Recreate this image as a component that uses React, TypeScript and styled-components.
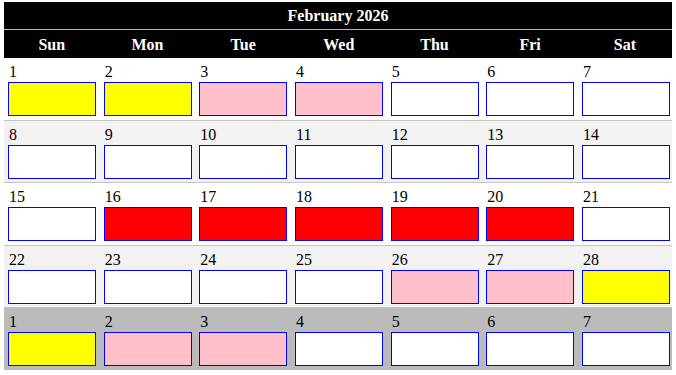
import React from "react"
import styled, { createGlobalStyle } from "styled-components"

// --- month data ---
type Fill = "none" | "yellow" | "pink" | "red"
type Day = { n: number; fill: Fill }

const weekdays = ["Sun", "Mon", "Tue", "Wed", "Thu", "Fri", "Sat"]

const row = (nums: number[], fills: Fill[]): Day[] =>
  nums.map((n, i) => ({ n, fill: fills[i] }))

const weeks: { days: Day[]; tone: "plain" | "alt" | "next" }[] = [
  {
    tone: "plain",
    days: row([1, 2, 3, 4, 5, 6, 7], ["yellow", "yellow", "pink", "pink", "none", "none", "none"]),
  },
  {
    tone: "alt",
    days: row([8, 9, 10, 11, 12, 13, 14], ["none", "none", "none", "none", "none", "none", "none"]),
  },
  {
    tone: "plain",
    days: row([15, 16, 17, 18, 19, 20, 21], ["none", "red", "red", "red", "red", "red", "none"]),
  },
  {
    tone: "alt",
    days: row([22, 23, 24, 25, 26, 27, 28], ["none", "none", "none", "none", "pink", "pink", "yellow"]),
  },
  {
    tone: "next",
    days: row([1, 2, 3, 4, 5, 6, 7], ["yellow", "pink", "pink", "none", "none", "none", "none"]),
  },
]

const fills: Record<Fill, string> = {
  none: "#ffffff",
  yellow: "#ffff00",
  pink: "#ffc0cb",
  red: "#ff0000",
}

const tones = {
  plain: "#ffffff",
  alt: "#f2f2f2",
  next: "#bbbbbb",
}

export default function App() {
  return (
    <>
      <GlobalStyle />
      <Calendar>
        <Title>February 2026</Title>
        <HeadRow>
          {weekdays.map(d => (
            <HeadCell key={d}>{d}</HeadCell>
          ))}
        </HeadRow>
        {weeks.map((w, i) => (
          <WeekRow key={i} $tone={w.tone} $last={i === weeks.length - 1}>
            {w.days.map((d, j) => (
              <DayCell key={j}>
                <DayNum>{d.n}</DayNum>
                <Slot $fill={fills[d.fill]} />
              </DayCell>
            ))}
          </WeekRow>
        ))}
      </Calendar>
    </>
  )
}

// --- styled components ---
const GlobalStyle = createGlobalStyle`
  body {
    margin: 0;
    background: #fff;
    font-family: "Liberation Serif", "Times New Roman", serif;
    font-size: 16px;
    color: #000;
  }
`

const cols = "repeat(6, 95.67px) 1fr"

const Calendar = styled.div`
  width: 668px;
  margin: 2px 0 0 4px;
`

const Title = styled.div`
  height: 27px;
  line-height: 27px;
  background: #000;
  color: #fff;
  font-weight: bold;
  text-align: center;
  border-bottom: 1px solid #bbb;
`

const HeadRow = styled.div`
  display: grid;
  grid-template-columns: ${cols};
  box-sizing: border-box;
  height: 28px;
  padding-top: 1px;
  background: #000;
`

const HeadCell = styled.div`
  color: #fff;
  font-weight: bold;
  text-align: center;
  line-height: 27px;
`

const WeekRow = styled.div<{ $tone: keyof typeof tones; $last: boolean }>`
  display: grid;
  grid-template-columns: ${cols};
  background: ${p => tones[p.$tone]};
  padding: 4px 0 3.5px;
  border-bottom: ${p => (p.$last ? "none" : "1px solid #c4c4c4")};
`

const DayCell = styled.div`
  padding: 0 4px;
`

const DayNum = styled.div`
  height: 20px;
  line-height: 20px;
  padding-left: 1px;
`

const Slot = styled.div<{ $fill: string }>`
  box-sizing: border-box;
  width: 88px;
  height: 34px;
  border: 1px solid #0000ff;
  background: ${p => p.$fill};
`
